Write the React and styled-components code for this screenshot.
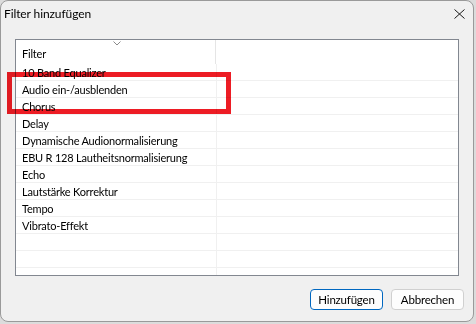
import React from "react";
import styled, { createGlobalStyle } from "styled-components";

const Global = createGlobalStyle`
  html, body { margin: 0; padding: 0; }
  body {
    background: #dcdcdc;
    font-family: "Lato", "Liberation Sans", sans-serif;
    font-size: 11px;
    letter-spacing: -0.2px;
    color: #000;
  }
`;

const Window = styled.div`
  position: relative;
  box-sizing: border-box;
  width: 474px;
  height: 322px;
  background: #f0f0f0;
  border: 1px solid #9a9a9a;
  border-radius: 8px;
  display: flex;
  flex-direction: column;
  overflow: hidden;
`;

const TitleBar = styled.div`
  box-sizing: border-box;
  height: 28px;
  display: flex;
  align-items: center;
  justify-content: space-between;
  padding: 0 8px 4px 3px;
  font-size: 12px;
  letter-spacing: -0.1px;
`;

const CloseIcon = styled.svg`
  display: block;
  margin-top: 1px;
`;

const Content = styled.div`
  flex: 1;
  display: flex;
  flex-direction: column;
  padding: 10px 14px 0 14px;
`;

const ListBox = styled.div`
  box-sizing: border-box;
  height: 237px;
  background: #fff;
  border: 1px solid #828790;
  overflow: hidden;
  position: relative;
`;

const Header = styled.div`
  height: 24px;
  display: grid;
  grid-template-columns: 200px 1fr;
  position: relative;
`;

const HeaderCell = styled.div`
  display: flex;
  align-items: center;
  padding: 2px 0 0 6px;
  border-right: ${(p) => (p.$divider ? "1px solid #e5e5e5" : "none")};
`;

const SortArrow = styled.svg`
  position: absolute;
  left: 97px;
  top: 1px;
`;

const Row = styled.div`
  height: 16px;
  display: grid;
  grid-template-columns: 201px 1fr;
  border-bottom: 1px solid #f0f0f0;
`;

const Cell = styled.div`
  display: flex;
  align-items: center;
  padding-left: 6px;
  white-space: nowrap;
  border-right: ${(p) => (p.$divider ? "1px solid #f0f0f0" : "none")};
`;

const Highlight = styled.div`
  position: absolute;
  left: 6px;
  top: 71px;
  width: 224px;
  height: 42px;
  box-sizing: border-box;
  border: 5px solid #ed1c24;
  mix-blend-mode: multiply;
  pointer-events: none;
`;

const Footer = styled.div`
  display: flex;
  justify-content: flex-end;
  gap: 8px;
  padding: 13px 0 0 0;
  margin-right: -5px;
`;

const Button = styled.button`
  box-sizing: border-box;
  width: 73px;
  height: 21px;
  padding: 0;
  font-family: inherit;
  font-size: 11.5px;
  letter-spacing: -0.2px;
  color: #000;
  background: #fdfdfd;
  border: 1px solid ${(p) => (p.$primary ? "#0067c0" : "#d0d0d0")};
  border-radius: 4px;
`;

const items = [
  "10 Band Equalizer",
  "Audio ein-/ausblenden",
  "Chorus",
  "Delay",
  "Dynamische Audionormalisierung",
  "EBU R 128 Lautheitsnormalisierung",
  "Echo",
  "Lautstärke Korrektur",
  "Tempo",
  "Vibrato-Effekt",
  "",
  "",
  "",
];

export default function App() {
  return (
    <>
      <Global />
      <Window>
        <TitleBar>
          <span>Filter hinzufügen</span>
          <CloseIcon width="11" height="10" viewBox="0 0 11 10">
            <path d="M0.5 0.5 L10.5 9.5 M10.5 0.5 L0.5 9.5" stroke="#1a1a1a" strokeWidth="1" fill="none" />
          </CloseIcon>
        </TitleBar>
        <Content>
          <ListBox>
            <Header>
              <HeaderCell $divider>Filter</HeaderCell>
              <HeaderCell />
              <SortArrow width="8" height="5" viewBox="0 0 8 5">
                <path d="M0.5 0.5 L4 4 L7.5 0.5" stroke="#8a8a8a" strokeWidth="1" fill="none" />
              </SortArrow>
            </Header>
            {items.map((t, i) => (
              <Row key={i}>
                <Cell $divider>{t}</Cell>
                <Cell />
              </Row>
            ))}
          </ListBox>
          <Footer>
            <Button $primary>Hinzufügen</Button>
            <Button>Abbrechen</Button>
          </Footer>
        </Content>
        <Highlight />
      </Window>
    </>
  );
}
